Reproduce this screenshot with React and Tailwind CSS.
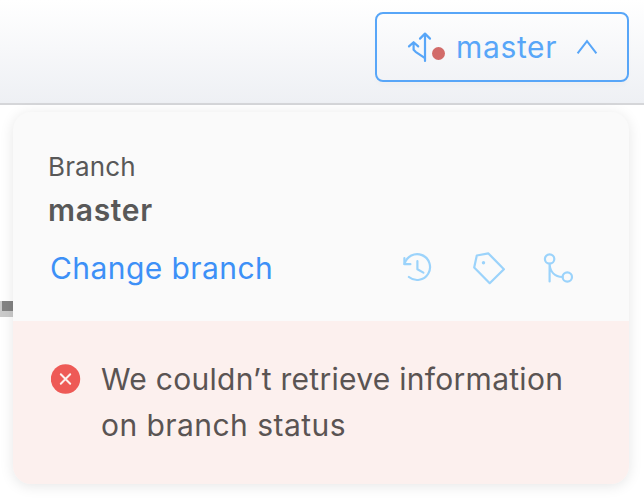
function BranchIcon() {
  return (
    <svg width="26" height="32" viewBox="0 0 26 32" fill="none" stroke="#58a6f8" strokeWidth="2.200" strokeLinecap="round" strokeLinejoin="round">
      <path d="M18 30V3M13 7.6l5-5 5 5" />
      <path d="M2 15.4l4.6-4.2 4.6 4.2M6.6 11.6v7.2l2 2L18 27.2" />
    </svg>
  );
}

function HistoryIcon() {
  return (
    <svg width="30" height="30" viewBox="0 0 30 30" fill="none" stroke="#9bd3fb" strokeWidth="2.200" strokeLinecap="round" strokeLinejoin="round">
      <path d="M2.4 5.200v6h6" />
      <path d="M2.6 11A12.9 12.9 0 1 1 6.9 24" />
      <path d="M15.4 8.200v8l6 3.4" />
    </svg>
  );
}

function TagIcon() {
  return (
    <svg width="34" height="34" viewBox="0 0 34 34" fill="none" stroke="#9bd3fb" strokeWidth="2.200" strokeLinejoin="round">
      <path d="M4.8 4.5L16.4 2.4L31.9 18.2L17.7 32.2L2.2 16.4Z" />
      <circle cx="11.5" cy="11.700" r="1.7" fill="#9bd3fb" stroke="none" />
    </svg>
  );
}

function CommitIcon() {
  return (
    <svg width="32" height="32" viewBox="0 0 32 32" fill="none" stroke="#9bd3fb" strokeWidth="2.200" strokeLinecap="round">
      <circle cx="6.6" cy="7" r="4.7" />
      <circle cx="24.3" cy="25" r="4.7" />
      <path d="M6.6 11.8V29.4M6.6 12c.4 7.600 5 12.600 13 13" />
    </svg>
  );
}

export default function App() {
  return (
    <div className="relative h-[500px] w-[644px] overflow-hidden bg-white font-[Inter,sans-serif] text-[#585858]">
      <header className="flex h-[105px] justify-end border-b-2 border-[#d5d6d9] bg-linear-to-b from-white to-[#eef0f4] pt-3 pr-[15px]">
        <button className="flex h-[70px] w-[254px] items-center rounded-lg border-2 border-[#58a6f8] pl-[30px] text-[#58a6f8] shadow-[0_4px_4px_rgba(0,0,0,0.015)]">
          <BranchIcon />
          <span className="mt-[13px] -ml-px size-[13px] rounded-full bg-[#d26b69]" />
          <span className="ml-[11px] w-[101px] text-[30px] leading-9 tracking-[0.65px]">master</span>
          <svg className="ml-[19px]" width="22" height="16" viewBox="0 0 22 16" fill="none" stroke="#58a6f8" strokeWidth="2">
            <path d="M1.600 14.400L11 2.200l9.400 12.200" />
          </svg>
        </button>
      </header>
      <div className="absolute top-[301px] left-0 h-4 w-5 bg-[#cbcbcb]">
        <div className="ml-0.5 h-2.5 bg-[#848484]" />
      </div>
      <section className="absolute top-[112px] left-[13px] flex h-[372px] w-[616px] flex-col overflow-hidden rounded-[18px] bg-[#fafafa] shadow-[0_2px_14px_rgba(0,0,0,0.10)]">
        <div className="h-[209px] pt-[39px] pl-[35px]">
          <p className="text-[26px] leading-8 tracking-[0.15px]">Branch</p>
          <p className="mt-[9px] text-[30px] leading-9 font-semibold tracking-[0.7px]">master</p>
          <div className="mt-[22px] flex h-9 items-center">
            <a className="ml-0.5 w-[352px] text-[30px] leading-9 tracking-[0.42px] text-[#3d90f7]">Change branch</a>
            <HistoryIcon />
            <span className="ml-10"><TagIcon /></span>
            <span className="ml-[37px]"><CommitIcon /></span>
          </div>
        </div>
        <div className="flex h-[163px] bg-[#fcf0ee] pt-[35px] pl-[38px]">
          <svg className="mt-2" width="30" height="30" viewBox="0 0 30 30">
            <circle cx="14.500" cy="15" r="14.700" fill="#ee5a56" />
            <path d="M9.800 10.300l9.400 9.400M19.200 10.300l-9.400 9.400" stroke="#fcf0ee" strokeWidth="2" strokeLinecap="round" />
          </svg>
          <p className="ml-5 text-[30px] leading-[46px] tracking-[0.28px] whitespace-nowrap text-[#5a5453]">
            We couldn’t retrieve information<br /><span className="tracking-[0.45px]">on branch status</span>
          </p>
        </div>
      </section>
    </div>
  );
}
